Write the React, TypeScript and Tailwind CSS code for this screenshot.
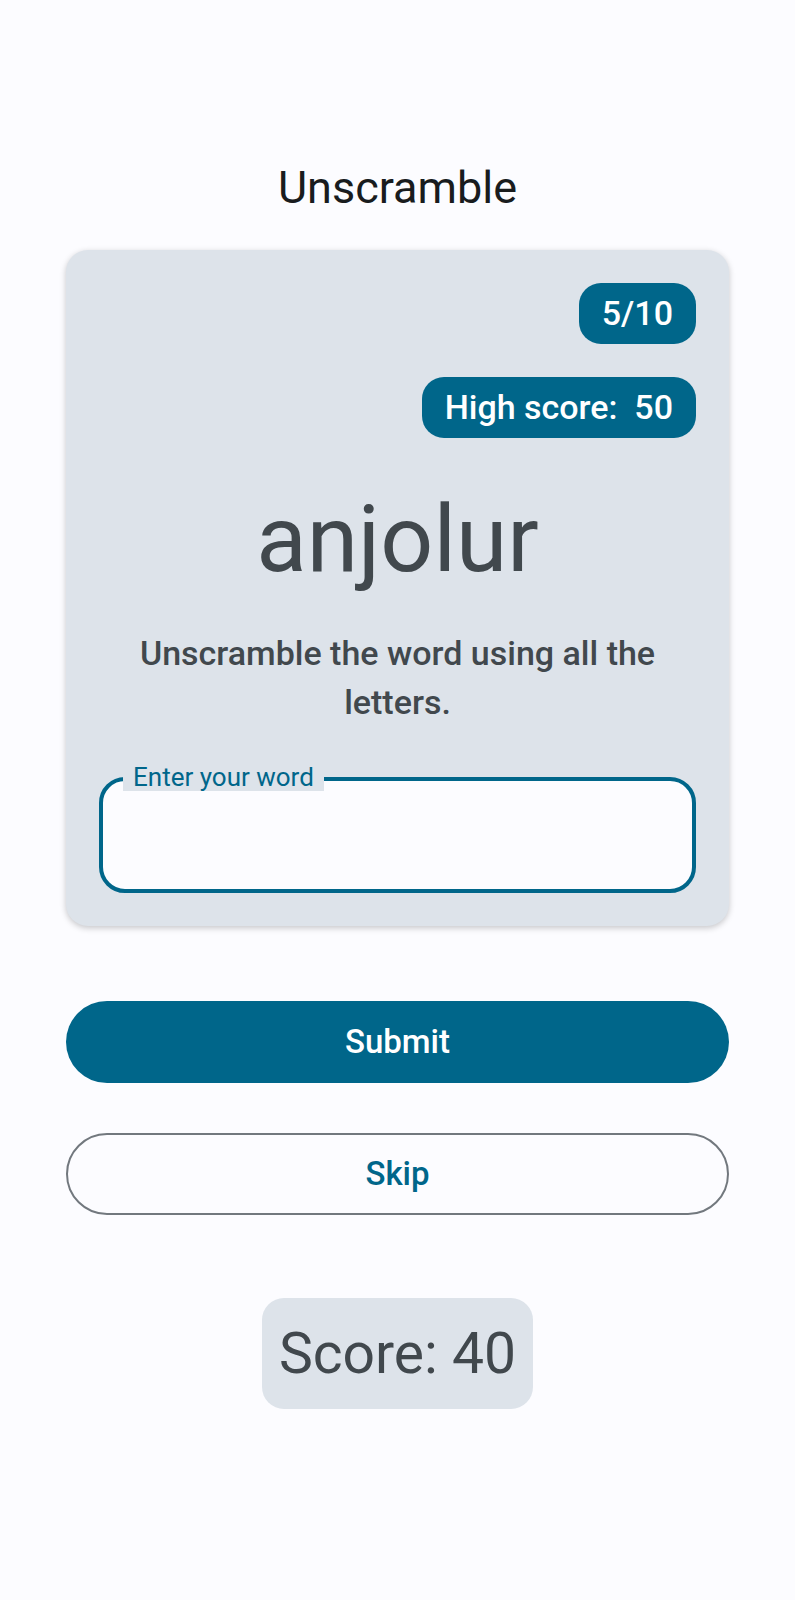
import React, { useState } from "react";

const Badge = ({ children }: { children: React.ReactNode }) => (
  <span className="flex h-[61px] items-center whitespace-pre rounded-[22px] bg-[#00668a] px-[23px] text-[34px] font-medium text-white">
    {children}
  </span>
);

export default function App() {
  const [guess, setGuess] = useState("");

  return (
    <div className="flex min-h-[1600px] flex-col items-center bg-[#fcfcff] px-[66px] pt-[162px] font-['Roboto',sans-serif]">
      <h1 className="text-[45px] leading-[52px] text-[#191c1e]">Unscramble</h1>

      <div className="mt-[36px] flex w-full flex-col rounded-[22px] bg-[#dde3ea] p-[33px] shadow-[0_2px_6px_rgba(0,0,0,0.22)]">
        <div className="flex flex-col items-end gap-[33px]">
          <Badge>5/10</Badge>
          <Badge>High score:  50</Badge>
        </div>

        <p className="mt-[48px] text-center text-[93px] leading-[108px] text-[#41484d]">anjolur</p>

        <p className="mt-[35px] px-[20px] text-center text-[34px] font-medium leading-[49px] text-[#41484d]">
          Unscramble the word using all the letters.
        </p>

        <div className="relative mt-[50px]">
          <input
            value={guess}
            onChange={(e) => setGuess(e.target.value)}
            className="h-[116px] w-full rounded-[26px] border-[4px] border-[#00668a] bg-[#fcfcff] px-[24px] text-[28px] text-[#191c1e] outline-none"
          />
          <span className="absolute left-[24px] top-[-14px] bg-[#dde3ea] px-[10px] text-[26px] leading-[28px] text-[#00668a]">
            Enter your word
          </span>
        </div>
      </div>

      <button className="mt-[75px] h-[82px] w-full rounded-full bg-[#00668a] text-[33px] font-medium text-white">
        Submit
      </button>
      <button className="mt-[50px] h-[82px] w-full rounded-full border-2 border-[#72787e] text-[33px] font-medium text-[#00668a]">
        Skip
      </button>

      <div className="mt-[83px] flex h-[111px] items-center rounded-[22px] bg-[#dde3ea] px-[17px] text-[57px] text-[#41484d]">
        Score: 40
      </div>
    </div>
  );
}
